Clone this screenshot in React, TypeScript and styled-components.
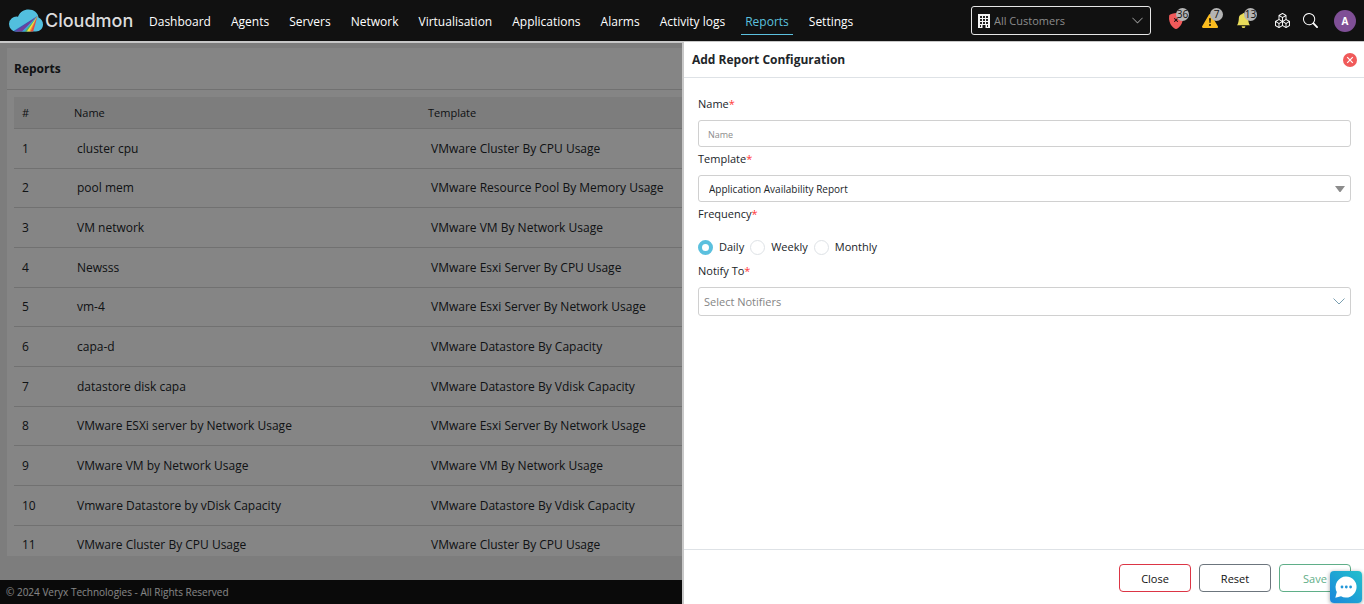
import React from "react";
import styled, { createGlobalStyle, css } from "styled-components";
import { BsShieldFillX, BsExclamationTriangleFill, BsBellFill, BsBoxes, BsSearch, BsChevronDown } from "react-icons/bs";

const Global = createGlobalStyle`
  *, *::before, *::after { box-sizing: border-box; }
  body { margin: 0; background: #f0f0f0; color: #212529; font-family: "Open Sans", "Noto Sans", sans-serif; font-size: 12px; }
  button, input, select { font-family: inherit; }
`;

const Page = styled.div`
  display: flex;
  flex-direction: column;
  height: 100vh;
  overflow: hidden;
`;

const TopBar = styled.header`
  display: flex;
  align-items: center;
  flex: none;
  height: 43px;
  padding: 0 8px;
  background: #111;
  border-bottom: 2px solid #c8c8c8;
`;

const Brand = styled.a`
  display: flex;
  align-items: center;
  gap: 2px;
  width: 137px;
  color: #dcdcdc;
  font: 500 18px/24px Inter, sans-serif;
  text-decoration: none;
`;

const Nav = styled.nav`
  display: flex;
  gap: 12px;
  flex: 1;
`;

const NavLink = styled.a<{ $active?: boolean }>`
  padding: 5px 4px 2px;
  border-bottom: 1px solid ${(p) => (p.$active ? "#5bc0de" : "transparent")};
  color: ${(p) => (p.$active ? "#5bc0de" : "#fff")};
  font-size: 12px;
  font-weight: 500;
  line-height: 20px;
  text-decoration: none;
  white-space: nowrap;
`;

const CustomerPicker = styled.label`
  display: flex;
  align-items: center;
  gap: 4px;
  width: 180px;
  height: 29px;
  padding: 0 6px;
  border: 1px solid #e6e6e6;
  border-radius: 3px;
  color: #fff;
  svg { flex: none; }
`;

const CustomerSelect = styled.select`
  flex: 1;
  min-width: 0;
  appearance: none;
  border: 0;
  padding: 0;
  background: transparent;
  color: #8c8c8c;
  font-size: 11px;
`;

const Tools = styled.div`
  display: flex;
  align-items: center;
  margin-left: 14px;
`;

const Alerts = styled.div`
  display: flex;
  margin-right: 5px;
`;

const Tool = styled.button<{ $wide?: boolean }>`
  position: relative;
  display: flex;
  align-items: center;
  width: ${(p) => (p.$wide ? 34 : 28)}px;
  height: 24px;
  padding: 0 3px;
  border: 0;
  background: none;
  color: #fff;
`;

const Count = styled.span`
  position: absolute;
  top: -1px;
  left: 11px;
  display: flex;
  justify-content: center;
  width: 13px;
  height: 13px;
  border-radius: 50%;
  background: #b4b4b4;
  color: #111;
  font-size: 10px;
  line-height: 13px;
`;

const Avatar = styled.button`
  width: 22px;
  height: 22px;
  margin-left: 6px;
  padding: 0;
  border: 0;
  border-radius: 50%;
  background: #7f4f96;
  color: #fff;
  font-size: 10px;
  font-weight: 700;
`;

const Main = styled.main`
  display: flex;
  flex: 1;
  min-height: 0;
  padding: 5px 7px 24px;
`;

const Card = styled.section`
  flex: 1;
  overflow: hidden;
  background: #fff;
`;

const CardTitle = styled.h1`
  margin: 0 0 7px;
  padding: 1px 7px 0;
  border-bottom: 1px solid #d8d8d8;
  font-size: 12px;
  font-weight: 700;
  line-height: 40px;
`;

const TableWrap = styled.div`
  padding: 0 7px;
`;

const ReportTable = styled.table`
  width: 100%;
  border-collapse: separate;
  border-spacing: 0;
  table-layout: fixed;
`;

const Column = styled.col<{ $width?: number }>`
  ${(p) => p.$width && css`width: ${p.$width}px;`}
`;

const HeadCell = styled.th`
  height: 32px;
  padding: 0 8px;
  border-bottom: 1px solid #d8d8d8;
  background: #f0f0f0;
  font-size: 11px;
  font-weight: 400;
  text-align: left;
`;

const Row = styled.tr`
  height: 40px;
  &:nth-child(3n + 2) { height: 39px; }
`;

const Cell = styled.td`
  padding: 0 11px;
  border-bottom: 1px solid #d8d8d8;
  font-size: 12px;
  line-height: 20px;
  white-space: nowrap;
  &:first-child { padding: 0 8px; }
`;

const PageFooter = styled.footer`
  flex: none;
  padding: 1px 6px 0;
  background: #141414;
  color: #fff;
  font-size: 10px;
  line-height: 23px;
`;

const Backdrop = styled.div`
  position: fixed;
  inset: 43px 0 0;
  background: rgba(0, 0, 0, 0.48);
`;

const Drawer = styled.aside`
  position: fixed;
  top: 42px;
  right: 0;
  bottom: 0;
  display: flex;
  flex-direction: column;
  width: 50%;
  border-left: 2px solid #c8c8c8;
  background: #fff;
`;

const DrawerHead = styled.header`
  display: flex;
  align-items: center;
  justify-content: space-between;
  height: 36px;
  padding: 0 7px 0 8px;
  border-bottom: 1px solid #dee2e6;
`;

const DrawerTitle = styled.h2`
  margin: 0;
  font-size: 12px;
  font-weight: 700;
`;

const Dismiss = styled.button`
  display: flex;
  padding: 0;
  border: 0;
  background: none;
`;

const Form = styled.form`
  display: flex;
  flex-direction: column;
  flex: 1;
  gap: 3px;
  padding: 17px 13px 0 14px;
  font-size: 11px;
`;

const Field = styled.div`
  display: flex;
  flex-direction: column;
  gap: 7px;
`;

const Label = styled.label`
  line-height: 18px;
`;

const Required = styled.span`
  color: #ff3838;
`;

const control = css`
  width: 100%;
  border: 1px solid #d0d0d0;
  border-radius: 3px;
  background: #fff;
`;

const TextInput = styled.input`
  ${control}
  height: 27px;
  padding: 1px 9px 0;
  font-size: 9px;
  &::placeholder { color: #8c8c8c; }
`;

const SelectBox = styled.div`
  position: relative;
  display: flex;
  align-items: center;
  svg { position: absolute; right: 6px; pointer-events: none; }
`;

const Select = styled.select<{ $hint?: boolean }>`
  ${control}
  appearance: none;
  height: ${(p) => (p.$hint ? 29 : 27)}px;
  padding: 0 ${(p) => (p.$hint ? 5 : 10)}px;
  color: ${(p) => (p.$hint ? "#858585" : "#212529")};
  font-size: ${(p) => (p.$hint ? 11 : 10)}px;
`;

const Frequency = styled.fieldset`
  margin: 0;
  padding: 0;
  border: 0;
`;

const Legend = styled.legend`
  padding: 0;
  line-height: 18px;
`;

const Choices = styled.div`
  display: flex;
  gap: 6px;
  padding: 15px 0 3px;
`;

const Choice = styled.label`
  display: flex;
  align-items: center;
  gap: 6px;
  line-height: 18px;
`;

const Radio = styled.input`
  appearance: none;
  width: 15px;
  height: 15px;
  margin: 0;
  border: 1px solid #dee2e6;
  border-radius: 50%;
  &:checked { border: 4px solid #5bc0de; }
`;

const Actions = styled.footer`
  display: flex;
  justify-content: flex-end;
  gap: 8px;
  padding: 14px 13px 12px;
  border-top: 1px solid #dee2e6;
`;

const ActionButton = styled.button<{ $tone: string; $ink?: string }>`
  width: 72px;
  height: 28px;
  padding: 0;
  border: 1px solid ${(p) => p.$tone};
  border-radius: 4px;
  background: #fff;
  color: ${(p) => p.$ink ?? "#111"};
  font-size: 11px;
`;

const Chat = styled.button`
  position: fixed;
  right: 2px;
  bottom: 1px;
  display: flex;
  align-items: center;
  justify-content: center;
  width: 32px;
  height: 32px;
  padding: 0;
  border: 0;
  border-radius: 4px;
  background: linear-gradient(45deg, #1b86dc, #22c0cc);
  box-shadow: 0 1px 4px rgba(0, 0, 0, 0.4);
`;

const CloudLogo = () => (
  <svg width="35" height="23" viewBox="0 0 35 23" aria-hidden="true">
    <defs>
      <clipPath id="cloud">
        <path d="M8 22.500a7.500 7.500 0 0 1-7-7.500 7.500 7.500 0 0 1 9-7.300C12 3 16 .5 20.500.5 26 .5 30 4 30.500 8.500 33.500 10 35 12.500 35 15.500c0 4-3 7-7 7z" />
      </clipPath>
    </defs>
    <g clipPath="url(#cloud)">
      <rect width="35" height="23" fill="#52bfde" />
      <path d="M29.500 7 4 23h6z" fill="#3f55b0" />
      <path d="M29.500 7 7 23h7z" fill="#70409c" />
      <path d="M29.500 7 13.500 23h3.500z" fill="#3aa0dc" />
      <path d="M29.500 7 16.500 23h2.500z" fill="#56b45a" />
      <path d="M29.500 7 18.500 23h3z" fill="#f7e13c" />
      <path d="M29.500 7 21 23h2z" fill="#f39a2e" />
      <path d="M29.500 7 22.500 23h2.500z" fill="#e84a3c" />
    </g>
  </svg>
);

const BuildingIcon = () => (
  <svg width="12" height="14" viewBox="0 0 12 14" aria-hidden="true">
    <path d="M0 0h12v14H7.500v-3h-3v3H0z" fill="#f4f4f4" />
    <path d="M2 2h2v2H2zM5 2h2v2H5zM8 2h2v2H8zM2 5h2v2H2zM5 5h2v2H5zM8 5h2v2H8zM2 8h2v2H2zM5 8h2v2H5zM8 8h2v2H8zM2 11h1v2H2zM9 11h1v2H9z" fill="#222" />
  </svg>
);

const links = ["Dashboard", "Agents", "Servers", "Network", "Virtualisation", "Applications", "Alarms", "Activity logs", "Reports", "Settings"];

const reports = [
  ["cluster cpu", "VMware Cluster By CPU Usage"],
  ["pool mem", "VMware Resource Pool By Memory Usage"],
  ["VM network", "VMware VM By Network Usage"],
  ["Newsss", "VMware Esxi Server By CPU Usage"],
  ["vm-4", "VMware Esxi Server By Network Usage"],
  ["capa-d", "VMware Datastore By Capacity"],
  ["datastore disk capa", "VMware Datastore By Vdisk Capacity"],
  ["VMware ESXi server by Network Usage", "VMware Esxi Server By Network Usage"],
  ["VMware VM by Network Usage", "VMware VM By Network Usage"],
  ["Vmware Datastore by vDisk Capacity", "VMware Datastore By Vdisk Capacity"],
  ["VMware Cluster By CPU Usage", "VMware Cluster By CPU Usage"],
];

export default function App() {
  return (
    <Page>
      <Global />
      <TopBar>
        <Brand href="#"><CloudLogo />Cloudmon</Brand>
        <Nav>
          {links.map((l) => <NavLink key={l} href="#" $active={l === "Reports"}>{l}</NavLink>)}
        </Nav>
        <CustomerPicker>
          <BuildingIcon />
          <CustomerSelect aria-label="Customer"><option>All Customers</option></CustomerSelect>
          <BsChevronDown size={13} color="#999" />
        </CustomerPicker>
        <Tools>
          <Alerts>
            <Tool $wide aria-label="Critical"><BsShieldFillX size={16} color="#f05a5a" /><Count>36</Count></Tool>
            <Tool $wide aria-label="Warnings"><BsExclamationTriangleFill size={16} color="#fbbc1f" /><Count>7</Count></Tool>
            <Tool $wide aria-label="Notifications"><BsBellFill size={15} color="#e8dc5a" /><Count>13</Count></Tool>
          </Alerts>
          <Tool aria-label="Modules"><BsBoxes size={15} /></Tool>
          <Tool aria-label="Search"><BsSearch size={15} /></Tool>
          <Avatar>A</Avatar>
        </Tools>
      </TopBar>
      <Main>
        <Card>
          <CardTitle>Reports</CardTitle>
          <TableWrap>
            <ReportTable>
              <colgroup><Column $width={52} /><Column $width={354} /><Column /></colgroup>
              <thead><tr><HeadCell>#</HeadCell><HeadCell>Name</HeadCell><HeadCell>Template</HeadCell></tr></thead>
              <tbody>
                {reports.map(([name, template], i) => (
                  <Row key={i}><Cell>{i + 1}</Cell><Cell>{name}</Cell><Cell>{template}</Cell></Row>
                ))}
              </tbody>
            </ReportTable>
          </TableWrap>
        </Card>
      </Main>
      <PageFooter>© 2024 Veryx Technologies - All Rights Reserved</PageFooter>
      <Backdrop />
      <Drawer>
        <DrawerHead>
          <DrawerTitle>Add Report Configuration</DrawerTitle>
          <Dismiss aria-label="Dismiss">
            <svg width="14" height="14" viewBox="0 0 14 14">
              <circle cx="7" cy="7" r="7" fill="#f05a5a" />
              <path d="M4.200 4.200l5.600 5.600M9.800 4.200l-5.600 5.600" stroke="#fff" strokeWidth="1.200" />
            </svg>
          </Dismiss>
        </DrawerHead>
        <Form>
          <Field>
            <Label htmlFor="name">Name<Required>*</Required></Label>
            <TextInput id="name" placeholder="Name" />
          </Field>
          <Field>
            <Label htmlFor="template">Template<Required>*</Required></Label>
            <SelectBox>
              <Select id="template"><option>Application Availability Report</option></Select>
              <svg width="10" height="6" viewBox="0 0 10 6"><path d="M0 0h10L5.500 6h-1z" fill="#8c8c8c" /></svg>
            </SelectBox>
          </Field>
          <Frequency>
            <Legend>Frequency<Required>*</Required></Legend>
            <Choices>
              {["Daily", "Weekly", "Monthly"].map((f) => (
                <Choice key={f}><Radio type="radio" name="frequency" defaultChecked={f === "Daily"} />{f}</Choice>
              ))}
            </Choices>
          </Frequency>
          <Field>
            <Label htmlFor="notify">Notify To<Required>*</Required></Label>
            <SelectBox>
              <Select id="notify" $hint><option>Select Notifiers</option></Select>
              <svg width="12" height="7" viewBox="0 0 12 7"><path d="M.5.5 6 6 11.500.5" fill="none" stroke="#7a9fb0" /></svg>
            </SelectBox>
          </Field>
        </Form>
        <Actions>
          <ActionButton $tone="#dc3545">Close</ActionButton>
          <ActionButton $tone="#6c757d">Reset</ActionButton>
          <ActionButton $tone="#5fae88" $ink="#5fae88">Save</ActionButton>
        </Actions>
      </Drawer>
      <Chat aria-label="Chat">
        <svg width="22" height="22" viewBox="0 0 22 22">
          <path d="M11 .5A10.500 10.500 0 1 1 6 20.200L.3 21.700 1.800 16A10.500 10.500 0 0 1 11 .5z" fill="#fff" />
          <g fill="#2196d8"><circle cx="7" cy="11" r="1.400" /><circle cx="11.300" cy="11" r="1.400" /><circle cx="15.600" cy="11" r="1.400" /></g>
        </svg>
      </Chat>
    </Page>
  );
}
